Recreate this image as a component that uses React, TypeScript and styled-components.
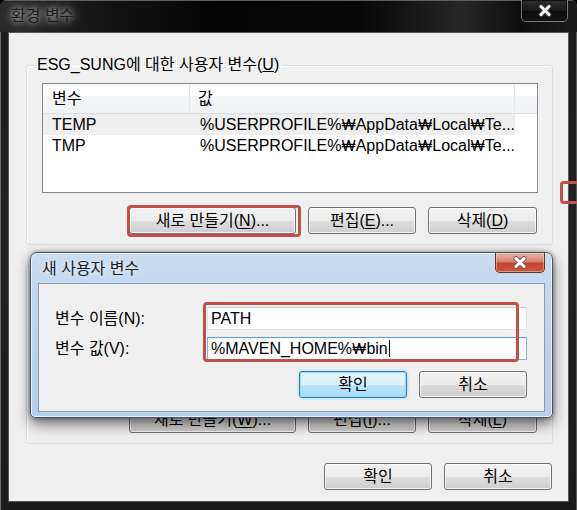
import React from "react";
import styled, { createGlobalStyle, css } from "styled-components";

const GlobalStyle = createGlobalStyle`
  html, body { margin: 0; padding: 0; background: #000; }
  body {
    font-family: "Liberation Sans", "Noto Sans CJK KR", sans-serif;
    font-size: 16px;
    color: #000;
  }
  * { box-sizing: border-box; }
`;

const Window = styled.div`
  position: relative;
  width: 577px;
  height: 510px;
  overflow: hidden;
  border-radius: 7px 7px 0 0;
  background: linear-gradient(180deg, #1c1c1c 0%, #232323 50%, #1a1a1a 100%);
  box-shadow: inset 1px 1px 0 #6c6c6c, inset -1px 0 0 #5a5a5a;
`;

const TitleBar = styled.div`
  height: 32px;
  display: flex;
  align-items: flex-start;
  justify-content: space-between;
  padding: 0 9px 0 11px;
  background: linear-gradient(
    90deg,
    #2a2a2a 0%,
    #141414 18%,
    #050505 35%,
    #060606 62%,
    #262626 80%,
    #0e0e0e 90%,
    #1c1c1c 100%
  );
  box-shadow: inset 0 1px 0 #5f5f5f;
`;

const TitleText = styled.span`
  line-height: 31px;
  font-size: 16px;
  color: #1c1c1c;
  text-shadow: 0 0 6px rgba(210, 210, 210, 0.95), 0 0 12px rgba(170, 170, 170, 0.8),
    0 0 18px rgba(140, 140, 140, 0.6);
`;

const CloseButton = styled.div<{ $variant: "dark" | "red" }>`
  display: flex;
  align-items: center;
  justify-content: center;
  border-radius: 0 0 5px 5px;
  ${(p) =>
    p.$variant === "dark"
      ? css`
          width: 47px;
          height: 22px;
          background: linear-gradient(180deg, #2e2e2e 0%, #1a1a1a 50%, #0c0c0c 51%, #141414 100%);
          border: 1px solid rgba(200, 200, 200, 0.55);
          border-top: none;
          box-shadow: inset 0 0 0 1px rgba(0, 0, 0, 0.6);
        `
      : css`
          width: 50px;
          height: 20px;
          background: linear-gradient(180deg, #eab1a4 0%, #d98472 45%, #c2432d 55%, #c95a42 100%);
          border: 1px solid #6e2c22;
          border-top: none;
          box-shadow: inset 0 0 0 1px rgba(255, 220, 210, 0.45);
        `}
`;

const XIcon = ({ outline }: { outline: string }) => (
  <svg width="16" height="13" viewBox="0 0 16 13">
    <path d="M4 2.5 L12 10.5 M12 2.5 L4 10.5" stroke={outline} strokeWidth="5" strokeLinecap="round" fill="none" />
    <path d="M4 2.5 L12 10.5 M12 2.5 L4 10.5" stroke="#ffffff" strokeWidth="3" strokeLinecap="round" fill="none" />
  </svg>
);

const Won = styled.span`
  font-family: "Inter", "Roboto", "Noto Sans", "DejaVu Sans", sans-serif;
  font-size: 15px;
`;

const PathText = ({ text }: { text: string }) => {
  const parts = text.split("₩");
  return (
    <>
      {parts.map((part, i) => (
        <React.Fragment key={i}>
          {i > 0 && <Won>₩</Won>}
          {part}
        </React.Fragment>
      ))}
    </>
  );
};

const Client = styled.div`
  margin: 0 8px;
  border: 1px solid #555555;
  background: #f0f0f0;
  padding: 23px 15px 11px 17px;
`;

const Group = styled.fieldset<{ $gap?: number }>`
  margin: ${(p) => p.$gap ?? 0}px 0 0 0;
  padding: 9px 14px 10px 15px;
  border: 1px solid #d5dfe5;
  border-radius: 3px;
  box-shadow: inset 1px 1px 0 #ffffff;
  min-width: 0;
`;

const Legend = styled.legend`
  margin-left: -8px;
  padding: 0 3px;
  font-size: 16px;
  line-height: 18px;
`;

const ListView = styled.div<{ $h: number }>`
  height: ${(p) => p.$h}px;
  border: 1px solid #828790;
  background: #ffffff;
  overflow: hidden;
`;

const ListHeader = styled.div`
  display: flex;
  height: 30px;
  background: linear-gradient(180deg, #ffffff 0%, #ffffff 42%, #f4f5f7 43%, #f1f2f4 100%);
  border-bottom: 1px solid #dcdde0;
`;

const HeaderCell = styled.div<{ $w?: number; $pad: number }>`
  ${(p) => (p.$w ? `width: ${p.$w}px;` : "flex: 1;")}
  padding-left: ${(p) => p.$pad}px;
  line-height: 29px;
  border-right: 1px solid #e3e5e8;
  white-space: nowrap;
  &:last-child { border-right: none; }
`;

const Row = styled.div<{ $selected?: boolean }>`
  display: flex;
  width: 472px;
  height: 21px;
  line-height: 21px;
  background: ${(p) => (p.$selected ? "#efefef" : "transparent")};
  &:first-of-type { margin-top: 1px; }
`;

const Cell = styled.div<{ $w: number; $pad: number }>`
  width: ${(p) => p.$w}px;
  padding-left: ${(p) => p.$pad}px;
  white-space: nowrap;
  overflow: hidden;
`;

const ButtonRow = styled.div<{ $top: number; $gap: number; $right?: number }>`
  display: flex;
  justify-content: flex-end;
  gap: ${(p) => p.$gap}px;
  margin-top: ${(p) => p.$top}px;
  padding-right: ${(p) => p.$right ?? 0}px;
`;

const Button = styled.button<{ $w: number; $focused?: boolean }>`
  width: ${(p) => p.$w}px;
  height: 27px;
  padding: 0;
  border-radius: 3px;
  font-family: inherit;
  font-size: 16px;
  line-height: 1;
  color: #000;
  ${(p) =>
    p.$focused
      ? css`
          border: 1px solid #3c7fb1;
          background: linear-gradient(180deg, #e6f5fd 0%, #d9f0fc 50%, #bee6fd 51%, #a9dbf6 100%);
          box-shadow: inset 0 0 0 1px #8fdcf7, 0 0 3px rgba(80, 190, 240, 0.7);
        `
      : css`
          border: 1px solid #707070;
          background: linear-gradient(180deg, #f2f2f2 0%, #ebebeb 50%, #dddddd 51%, #cfcfcf 100%);
          box-shadow: inset 0 0 0 1px rgba(255, 255, 255, 0.75);
        `}
  u { text-decoration-thickness: 1px; text-underline-offset: 2px; }
`;

const SubDialog = styled.div`
  position: absolute;
  left: 30px;
  top: 252px;
  width: 523px;
  height: 166px;
  display: flex;
  flex-direction: column;
  padding: 0 7px 5px 7px;
  border: 1px solid #4c5663;
  border-radius: 7px 7px 5px 5px;
  background: linear-gradient(180deg, #cadef1 0%, #c1d7ef 25%, #b9d2ed 60%, #b6cfeb 100%);
  box-shadow: inset 0 0 0 1px rgba(255, 255, 255, 0.65), 0 6px 14px rgba(0, 0, 0, 0.55),
    0 0 4px rgba(0, 0, 0, 0.4);
`;

const SubTitleBar = styled.div`
  height: 30px;
  display: flex;
  align-items: flex-start;
  justify-content: space-between;
`;

const SubTitleText = styled.span`
  margin-left: 4px;
  line-height: 31px;
  font-size: 16px;
  color: #1b1b1b;
  text-shadow: 0 0 5px rgba(255, 255, 255, 0.9);
`;

const SubClient = styled.div`
  flex: 1;
  border: 1px solid #8b9bb0;
  background: #f0f0f0;
  padding: 23px 17px 0 16px;
`;

const Form = styled.div`
  display: grid;
  grid-template-columns: 152px 320px;
  row-gap: 7px;
  align-items: center;
`;

const Label = styled.label`
  font-size: 16px;
  line-height: 20px;
`;

const TextBox = styled.div<{ $focused?: boolean }>`
  height: 23px;
  display: flex;
  align-items: center;
  padding-left: 3px;
  background: #ffffff;
  font-size: 16px;
  white-space: pre;
  border: 1px solid ${(p) => (p.$focused ? "#7eb4ea" : "#dfe3e8")};
  border-top-color: ${(p) => (p.$focused ? "#569de5" : "#c9ced5")};
`;

const Caret = styled.span`
  display: inline-block;
  width: 1px;
  height: 17px;
  margin-left: 1px;
  background: #000;
`;

const Highlight = styled.div<{ $x: number; $y: number; $w: number; $h: number }>`
  position: absolute;
  left: ${(p) => p.$x}px;
  top: ${(p) => p.$y}px;
  width: ${(p) => p.$w}px;
  height: ${(p) => p.$h}px;
  border: 3px solid #c0504d;
  border-radius: 4px;
  pointer-events: none;
`;

const variables = [
  { name: "TEMP", value: "%USERPROFILE%₩AppData₩Local₩Te...", selected: true },
  { name: "TMP", value: "%USERPROFILE%₩AppData₩Local₩Te..." },
];

export default function App() {
  return (
    <>
      <GlobalStyle />
      <Window>
        <TitleBar>
          <TitleText>환경 변수</TitleText>
          <CloseButton $variant="dark">
            <XIcon outline="#3a3a3a" />
          </CloseButton>
        </TitleBar>
        <Client>
          <Group>
            <Legend>
              ESG_SUNG에 대한 사용자 변수(<u>U</u>)
            </Legend>
            <ListView $h={110}>
              <ListHeader>
                <HeaderCell $w={147} $pad={9}>변수</HeaderCell>
                <HeaderCell $w={325} $pad={8}>값</HeaderCell>
                <HeaderCell $pad={0} />
              </ListHeader>
              {variables.map((v) => (
                <Row key={v.name} $selected={v.selected}>
                  <Cell $w={147} $pad={9}>{v.name}</Cell>
                  <Cell $w={325} $pad={10}>
                    <PathText text={v.value} />
                  </Cell>
                </Row>
              ))}
            </ListView>
            <ButtonRow $top={14} $gap={12} $right={1}>
              <Button $w={167}>
                새로 만들기(<u>N</u>)...
              </Button>
              <Button $w={108}>
                편집(<u>E</u>)...
              </Button>
              <Button $w={109}>
                삭제(<u>D</u>)
              </Button>
            </ButtonRow>
          </Group>
          <Group $gap={12}>
            <Legend>
              시스템 변수(<u>S</u>)
            </Legend>
            <ListView $h={108} />
            <ButtonRow $top={14} $gap={12} $right={1}>
              <Button $w={167}>
                새로 만들기(<u>W</u>)...
              </Button>
              <Button $w={108}>
                편집(<u>I</u>)...
              </Button>
              <Button $w={109}>
                삭제(<u>L</u>)
              </Button>
            </ButtonRow>
          </Group>
          <ButtonRow $top={19} $gap={12} $right={1}>
            <Button $w={108}>확인</Button>
            <Button $w={108}>취소</Button>
          </ButtonRow>
        </Client>

        <SubDialog>
          <SubTitleBar>
            <SubTitleText>새 사용자 변수</SubTitleText>
            <CloseButton $variant="red">
              <XIcon outline="#7a5a55" />
            </CloseButton>
          </SubTitleBar>
          <SubClient>
            <Form>
              <Label>변수 이름(N):</Label>
              <TextBox>PATH</TextBox>
              <Label>변수 값(V):</Label>
              <TextBox $focused>
                <PathText text="%MAVEN_HOME%₩bin" />
                <Caret />
              </TextBox>
            </Form>
            <ButtonRow $top={11} $gap={12}>
              <Button $w={108} $focused>
                확인
              </Button>
              <Button $w={108}>취소</Button>
            </ButtonRow>
          </SubClient>
        </SubDialog>

        <Highlight $x={127} $y={205} $w={174} $h={32} />
        <Highlight $x={203} $y={302} $w={316} $h={60} />
        <Highlight $x={560} $y={181} $w={30} $h={23} />
      </Window>
    </>
  );
}
